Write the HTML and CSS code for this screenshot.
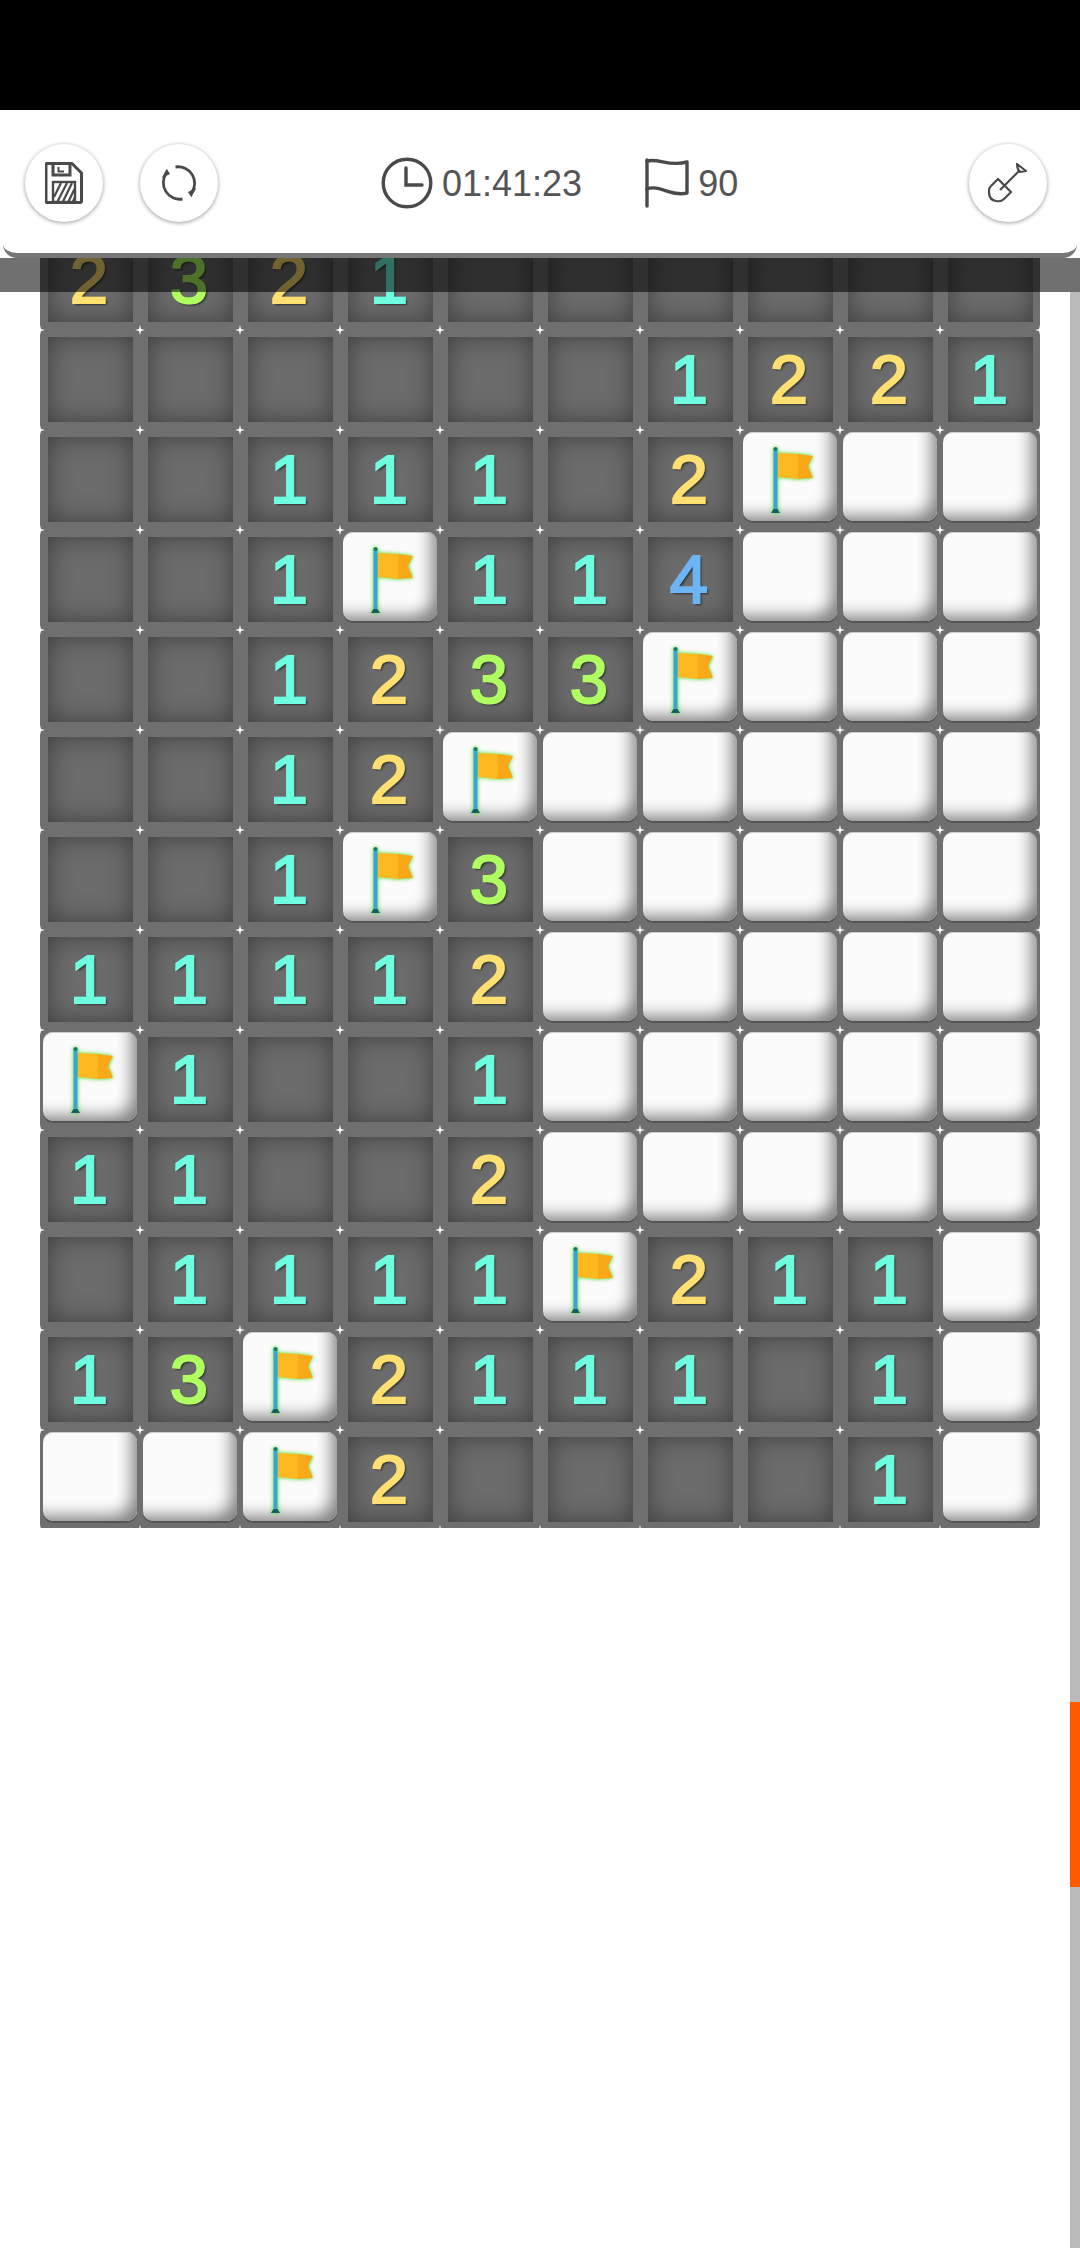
FILE: index.html
```html
<!DOCTYPE html>
<html lang="en">

<head>
    <meta charset="UTF-8">
    <meta name="viewport" content="width=device-width, initial-scale=1.0">
    <title>Minesweeper</title>
    <link rel="stylesheet" href="styles.css">
</head>

<body>
    <svg class="defs" width="0" height="0">
        <symbol id="flag" viewBox="0 0 94 89">
            <rect x="30.5" y="16" width="4" height="64" fill="#3f9fd8"/>
            <circle cx="32.5" cy="17" r="2" fill="#1c7a5a"/>
            <path d="M28 81 L30.5 77 H34.5 L37 81 Z" fill="#14605e"/>
            <path d="M35 21 L55 22 V47 L35 45 Z" fill="#fdb91f"/>
            <path d="M55 22 L70 24 L65 34 L70 46 L55 47 Z" fill="#f9a818"/>
        </symbol>
    </svg>

    <div class="status"></div>

    <header class="topbar">
        <button class="round">
            <svg width="38" height="42" viewBox="0 0 38 42" fill="none" stroke="#4a4a4a" stroke-width="3">
                <path d="M2 1.5 H27 L36.5 11 V39 Q36.5 40.5 35 40.5 H2 Q1 40.5 1 39 V3 Q1 1.5 2 1.5 Z" stroke-linejoin="round"/>
                <path d="M8 2 V13 H25 V2"/>
                <path d="M13.5 5 V9.5 H19" stroke-width="2"/>
                <rect x="8" y="20" width="22" height="20" stroke-width="2.4"/>
                <path d="M9 35 L16 21 M12.5 39.5 L22 21 M18 39.5 L27 21 M23.5 39.5 L29.5 27 M28 39.5 L30 35" stroke-width="2.2"/>
            </svg>
        </button>
        <button class="round">
            <svg width="38" height="38" viewBox="0 0 38 38" fill="#4a4a4a" stroke="none">
                <path d="M15.5 3 A16.5 16.5 0 0 1 31.5 29" fill="none" stroke="#4a4a4a" stroke-width="2.8"/>
                <path d="M28 28 L36.3 24 L31.3 33.3 Z"/>
                <path d="M22.5 35 A16.5 16.5 0 0 1 6.5 9" fill="none" stroke="#4a4a4a" stroke-width="2.8"/>
                <path d="M10 10 L1.7 14 L6.7 4.7 Z"/>
            </svg>
        </button>
        <div class="stat stat-time">
            <svg width="52" height="52" viewBox="0 0 52 52" fill="none" stroke="#4a4a4a" stroke-width="3.4">
                <circle cx="26" cy="26" r="23.8"/>
                <path d="M25 11 V28 H41" stroke-linecap="round"/>
            </svg>
            <span>01:41:23</span>
        </div>
        <div class="stat stat-flags">
            <svg width="44" height="50" viewBox="0 0 44 50" fill="none" stroke="#4a4a4a" stroke-width="3.4" stroke-linecap="round">
                <path d="M2 48 V2"/>
                <path d="M2 3 C14 0 24 9 42 4 V35 C26 39 14 26 2 31" stroke-linejoin="round"/>
            </svg>
            <span>90</span>
        </div>
        <button class="round round-last">
            <svg width="40" height="40" viewBox="0 0 40 40" fill="none" stroke="#4a4a4a" stroke-width="2.2" stroke-linejoin="round">
                <path d="M12 27 L31 8"/>
                <path d="M29 1 L38 8 L32 9 Q29 6 29 1 Z"/>
                <path d="M10 16 L23 29 L16 36 Q13 39 8 38 Q1 37 1 29 Q0.5 25 3 23 Z"/>
            </svg>
        </button>
    </header>

    <main class="board">
        <div class="cell n2">2</div><div class="cell n3">3</div><div class="cell n2">2</div><div class="cell n1">1</div><div class="cell"></div><div class="cell"></div><div class="cell"></div><div class="cell"></div><div class="cell"></div><div class="cell"></div>
        <div class="cell"></div><div class="cell"></div><div class="cell"></div><div class="cell"></div><div class="cell"></div><div class="cell"></div><div class="cell n1">1</div><div class="cell n2">2</div><div class="cell n2">2</div><div class="cell n1">1</div>
        <div class="cell"></div><div class="cell"></div><div class="cell n1">1</div><div class="cell n1">1</div><div class="cell n1">1</div><div class="cell"></div><div class="cell n2">2</div><div class="tile"><svg><use href="#flag"/></svg></div><div class="tile"></div><div class="tile"></div>
        <div class="cell"></div><div class="cell"></div><div class="cell n1">1</div><div class="tile"><svg><use href="#flag"/></svg></div><div class="cell n1">1</div><div class="cell n1">1</div><div class="cell n4">4</div><div class="tile"></div><div class="tile"></div><div class="tile"></div>
        <div class="cell"></div><div class="cell"></div><div class="cell n1">1</div><div class="cell n2">2</div><div class="cell n3">3</div><div class="cell n3">3</div><div class="tile"><svg><use href="#flag"/></svg></div><div class="tile"></div><div class="tile"></div><div class="tile"></div>
        <div class="cell"></div><div class="cell"></div><div class="cell n1">1</div><div class="cell n2">2</div><div class="tile"><svg><use href="#flag"/></svg></div><div class="tile"></div><div class="tile"></div><div class="tile"></div><div class="tile"></div><div class="tile"></div>
        <div class="cell"></div><div class="cell"></div><div class="cell n1">1</div><div class="tile"><svg><use href="#flag"/></svg></div><div class="cell n3">3</div><div class="tile"></div><div class="tile"></div><div class="tile"></div><div class="tile"></div><div class="tile"></div>
        <div class="cell n1">1</div><div class="cell n1">1</div><div class="cell n1">1</div><div class="cell n1">1</div><div class="cell n2">2</div><div class="tile"></div><div class="tile"></div><div class="tile"></div><div class="tile"></div><div class="tile"></div>
        <div class="tile"><svg><use href="#flag"/></svg></div><div class="cell n1">1</div><div class="cell"></div><div class="cell"></div><div class="cell n1">1</div><div class="tile"></div><div class="tile"></div><div class="tile"></div><div class="tile"></div><div class="tile"></div>
        <div class="cell n1">1</div><div class="cell n1">1</div><div class="cell"></div><div class="cell"></div><div class="cell n2">2</div><div class="tile"></div><div class="tile"></div><div class="tile"></div><div class="tile"></div><div class="tile"></div>
        <div class="cell"></div><div class="cell n1">1</div><div class="cell n1">1</div><div class="cell n1">1</div><div class="cell n1">1</div><div class="tile"><svg><use href="#flag"/></svg></div><div class="cell n2">2</div><div class="cell n1">1</div><div class="cell n1">1</div><div class="tile"></div>
        <div class="cell n1">1</div><div class="cell n3">3</div><div class="tile"><svg><use href="#flag"/></svg></div><div class="cell n2">2</div><div class="cell n1">1</div><div class="cell n1">1</div><div class="cell n1">1</div><div class="cell"></div><div class="cell n1">1</div><div class="tile"></div>
        <div class="tile"></div><div class="tile"></div><div class="tile"><svg><use href="#flag"/></svg></div><div class="cell n2">2</div><div class="cell"></div><div class="cell"></div><div class="cell"></div><div class="cell"></div><div class="cell n1">1</div><div class="tile"></div>

        <!-- little sparkles where the grid lines cross -->
        <svg class="sparkles" width="1000" height="1298">
            <defs>
                <pattern id="sparkle" width="100" height="100" patternUnits="userSpaceOnUse">
                    <path d="M0 -5 L1 -1 L5 0 L1 1 L0 5 L-1 1 L-5 0 L-1 -1 Z" fill="#fff" transform="translate(100 100)"/>
                    <path d="M0 -5 L1 -1 L5 0 L1 1 L0 5 L-1 1 L-5 0 L-1 -1 Z" fill="#fff"/>
                    <path d="M0 -5 L1 -1 L5 0 L1 1 L0 5 L-1 1 L-5 0 L-1 -1 Z" fill="#fff" transform="translate(100 0)"/>
                    <path d="M0 -5 L1 -1 L5 0 L1 1 L0 5 L-1 1 L-5 0 L-1 -1 Z" fill="#fff" transform="translate(0 100)"/>
                </pattern>
            </defs>
            <rect width="1000" height="1298" fill="url(#sparkle)"/>
        </svg>
    </main>

    <div class="dim"></div>

    <div class="scrollbar">
        <div class="thumb"></div>
    </div>
</body>

</html>
```

FILE: styles.css
```css
* {
    margin: 0;
    padding: 0;
    box-sizing: border-box;
}

html,
body {
    height: 2248px;
    overflow: hidden;
}

body {
    position: relative;
    background-color: #fff;
    font-family: "Liberation Sans", Arial, sans-serif;
}

.defs {
    position: absolute;
}

.status {
    height: 110px;
    background-color: #000;
}

.topbar {
    position: relative;
    z-index: 3;
    display: flex;
    align-items: center;
    width: 1074px;
    height: 148px;
    margin-left: 3px;
    padding: 3px 30px 0 22px;
    background-color: #fff;
    border-bottom: 5px solid #777;
    border-radius: 0 0 14px 14px;
}

.round {
    display: flex;
    justify-content: center;
    align-items: center;
    flex: none;
    width: 78px;
    height: 78px;
    margin-right: 37px;
    background-color: #fff;
    border: none;
    border-radius: 50%;
    box-shadow: 0 1px 4px rgba(0, 0, 0, 0.4);
}

.round-last {
    margin-left: auto;
    margin-right: 0;
}

.stat {
    display: flex;
    align-items: center;
    gap: 9px;
    font-size: 36px;
    color: #555;
}

.stat span {
    padding-top: 2px;
}

.stat-time {
    margin-left: 126px;
}

.stat-flags {
    margin-left: 63px;
}

.board {
    position: relative;
    display: grid;
    grid-template-columns: repeat(10, 100px);
    grid-auto-rows: 100px;
    width: 1000px;
    height: 1298px;
    margin: -28px 0 0 40px;
    overflow: hidden;
    background-color: #6f6f6f;
}

.cell {
    display: flex;
    justify-content: center;
    align-items: center;
    margin: 7px 7px 8px 8px;
    padding-right: 3px;
    background-color: #6c6c6c;
    box-shadow: inset 0 0 26px #3e3e3e;
    font-size: 69px;
    -webkit-text-stroke: 2px currentColor;
    text-shadow: 2px 2px 2px #333;
}

.n1 {
    color: #6effe0;
}

.n2 {
    color: #ffe070;
}

.n3 {
    color: #b0ff60;
}

.n4 {
    color: #6db4f5;
}

.tile {
    margin: 2px 3px 9px 3px;
    background-color: #fbfbfb;
    border-radius: 10px;
    box-shadow: inset -14px -14px 16px -9px #808080, inset 0 1px 0 #ccc, 0 2px 0 #555;
}

.tile svg {
    display: block;
    width: 94px;
    height: 89px;
    filter: drop-shadow(0 0 2px #44dd22);
}

.sparkles {
    position: absolute;
    left: 0;
    top: 0;
}

.dim {
    position: absolute;
    z-index: 2;
    left: 0;
    right: 0;
    top: 258px;
    height: 34px;
    background-color: rgba(0, 0, 0, 0.56);
}

.scrollbar {
    position: absolute;
    z-index: 1;
    right: 0;
    top: 292px;
    bottom: 0;
    width: 10px;
    padding-top: 1410px;
    background-color: #bababa;
}

.thumb {
    height: 185px;
    background-color: #ff5a00;
}
```
